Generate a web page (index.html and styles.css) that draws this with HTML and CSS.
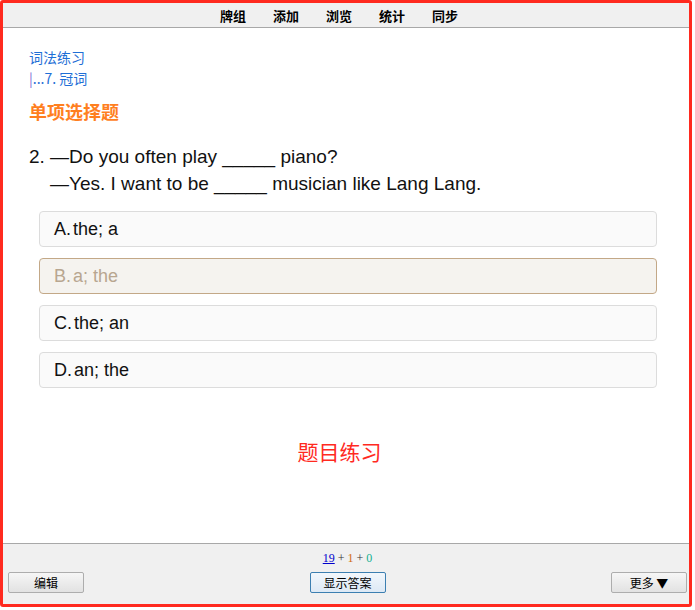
FILE: index.html
```html
<!DOCTYPE html>
<html lang="zh-CN">
<head>
    <meta charset="UTF-8">
    <title>题目练习</title>
    <link rel="stylesheet" href="styles.css">
</head>
<body>

<div class="frame">
    <div class="topbar">
        <a class="nav-item">牌组</a>
        <a class="nav-item">添加</a>
        <a class="nav-item">浏览</a>
        <a class="nav-item">统计</a>
        <a class="nav-item">同步</a>
    </div>

    <div class="main">
        <div class="crumb">词法练习</div>
        <div class="crumb"><span class="bar">|</span>...7. 冠词</div>

        <div class="qtype">单项选择题</div>

        <div class="question">
            <div>2. —Do you often play _____ piano?</div>
            <div class="indent">—Yes. I want to be _____ musician like Lang Lang.</div>
        </div>

        <div class="options">
            <div class="option"><span class="opt-key">A.</span>the; a</div>
            <div class="option selected"><span class="opt-key">B.</span>a; the</div>
            <div class="option"><span class="opt-key">C.</span>the; an</div>
            <div class="option"><span class="opt-key">D.</span>an; the</div>
        </div>

        <div class="label">题目练习</div>
    </div>

    <div class="bottombar">
        <div class="counts">
            <span class="c-new">19</span> + <span class="c-learn">1</span> + <span class="c-review">0</span>
        </div>
        <div class="buttons">
            <button class="btn">编辑</button>
            <button class="btn btn-main">显示答案</button>
            <button class="btn">更多 ▼</button>
        </div>
    </div>
</div>

</body>
</html>
```

FILE: styles.css
```css
body {
    margin: 0;
    background: #fff;
    font-family: "Liberation Sans", Arial, "Noto Sans CJK SC", sans-serif;
}

.frame {
    width: 692px;
    height: 607px;
    box-sizing: border-box;
    border: 3px solid #ff2a1f;
    border-radius: 3px;
    display: flex;
    flex-direction: column;
}

.topbar {
    height: 24px;
    background: #f0f0f0;
    border-bottom: 1px solid #a8a8a8;
    display: flex;
    justify-content: center;
    align-items: center;
    gap: 27px;
    padding-right: 14px;
}

.nav-item {
    font-family: "Noto Sans CJK SC", sans-serif;
    font-size: 13px;
    font-weight: bold;
    color: #000;
}

.main {
    flex: 1;
    padding: 19px 32px 0 26px;
}

.crumb {
    font-family: "Noto Sans CJK SC", sans-serif;
    font-size: 14px;
    line-height: 21px;
    color: #1f6fd6;
}

.bar {
    color: #7a6fd6;
}

.qtype {
    margin-top: 9px;
    font-family: "Noto Sans CJK SC", sans-serif;
    font-size: 18px;
    font-weight: bold;
    color: #ff7f1f;
}

.question {
    margin-top: 19px;
    font-size: 19px;
    line-height: 27px;
    color: #111;
}

.indent {
    padding-left: 21px;
}

.options {
    margin-top: 14px;
    padding-left: 10px;
    display: flex;
    flex-direction: column;
    gap: 11px;
}

.option {
    height: 34px;
    line-height: 34px;
    padding-left: 14px;
    font-size: 18px;
    color: #111;
    background: #fafafa;
    border: 1px solid #dcdcdc;
    border-radius: 4px;
}

.opt-key {
    margin-right: 2px;
}

.option.selected {
    background: #f5f3ef;
    border-color: #c3a887;
    color: #b8a690;
}

.label {
    margin-top: 48px;
    padding-right: 7px;
    text-align: center;
    font-family: "Noto Sans CJK SC", sans-serif;
    font-size: 21px;
    color: #ff2a1f;
}

.bottombar {
    height: 60px;
    background: #f0f0f0;
    border-top: 1px solid #a8a8a8;
    padding: 0 2px 0 5px;
}

.counts {
    margin-top: 7px;
    text-align: center;
    font-family: "Liberation Serif", serif;
    font-size: 12px;
    color: #333;
}

.c-new {
    color: #0000cc;
    text-decoration: underline;
}

.c-learn {
    color: #d06a10;
}

.c-review {
    color: #10b090;
}

.buttons {
    margin-top: 6px;
    display: flex;
    justify-content: space-between;
}

.btn {
    width: 76px;
    height: 21px;
    padding: 0;
    font-family: "Noto Sans CJK SC", sans-serif;
    font-size: 12px;
    color: #000;
    background: linear-gradient(#f6f6f6, #e2e2e2);
    border: 1px solid #adadad;
    border-radius: 2px;
}

.btn-main {
    border-color: #3c7fb1;
    background: linear-gradient(#f2f7fc, #dde9f5);
}
```
